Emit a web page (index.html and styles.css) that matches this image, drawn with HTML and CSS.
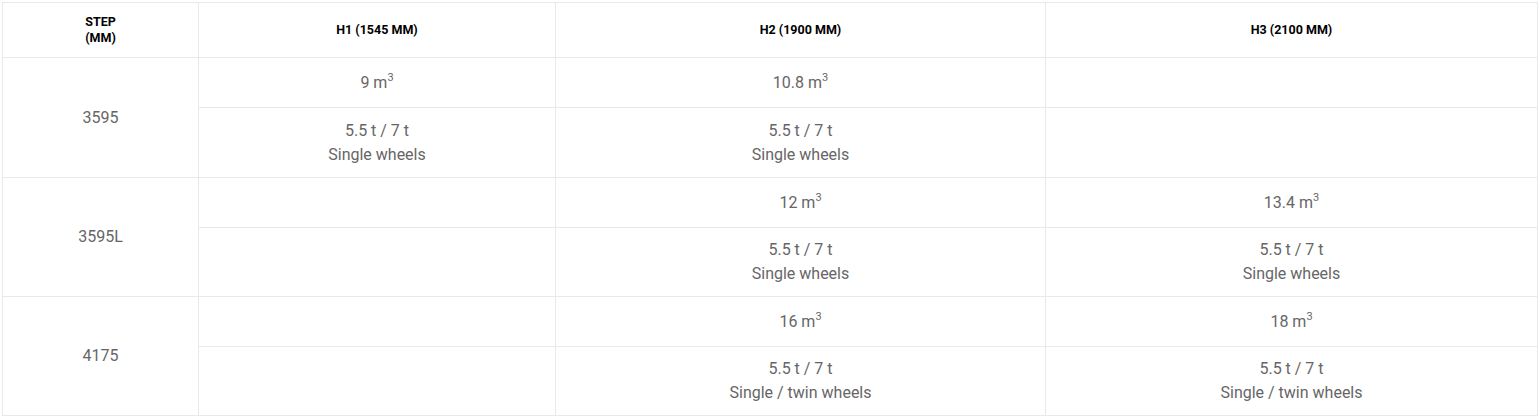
FILE: index.html
```html
<!DOCTYPE html>
<html>
<head>
<meta charset="utf-8">
<link rel="stylesheet" href="styles.css">
</head>
<body>
<table class="spec">
  <colgroup>
    <col class="c1"><col class="c2"><col class="c3"><col class="c4">
  </colgroup>
  <thead>
    <tr class="head">
      <th>STEP<br>(MM)</th>
      <th>H1 (1545 MM)</th>
      <th>H2 (1900 MM)</th>
      <th>H3 (2100 MM)</th>
    </tr>
  </thead>
  <tbody>
    <tr class="vol">
      <td rowspan="2">3595</td>
      <td>9 m<sup>3</sup></td>
      <td>10.8 m<sup>3</sup></td>
      <td></td>
    </tr>
    <tr class="load load-first">
      <td>5.5 t / 7 t<br>Single wheels</td>
      <td>5.5 t / 7 t<br>Single wheels</td>
      <td></td>
    </tr>
    <tr class="vol">
      <td rowspan="2">3595L</td>
      <td></td>
      <td>12 m<sup>3</sup></td>
      <td>13.4 m<sup>3</sup></td>
    </tr>
    <tr class="load">
      <td></td>
      <td>5.5 t / 7 t<br>Single wheels</td>
      <td>5.5 t / 7 t<br>Single wheels</td>
    </tr>
    <tr class="vol">
      <td rowspan="2">4175</td>
      <td></td>
      <td>16 m<sup>3</sup></td>
      <td>18 m<sup>3</sup></td>
    </tr>
    <tr class="load">
      <td></td>
      <td>5.5 t / 7 t<br>Single / twin wheels</td>
      <td>5.5 t / 7 t<br>Single / twin wheels</td>
    </tr>
  </tbody>
</table>
</body>
</html>
```
FILE: styles.css
```css
html, body {
  margin: 0;
  padding: 0;
  background: #fff;
}
body {
  padding: 2px;
  font-family: Roboto, "Liberation Sans", sans-serif;
}
.spec {
  border-collapse: collapse;
  table-layout: fixed;
  width: 1535px;
}
.c1 { width: 196px; }
.c2 { width: 357px; }
.c3 { width: 490px; }
.c4 { width: 492px; }
.spec th,
.spec td {
  border: 1px solid #e9e9e9;
  text-align: center;
  vertical-align: middle;
  padding: 0 8px;
}
.spec th {
  height: 54px;
  font-size: 12.5px;
  font-weight: 700;
  line-height: 16px;
  color: #000;
}
.spec td {
  font-size: 16px;
  line-height: 24px;
  color: #666;
}
.vol td { height: 49px; }
.load td { height: 68px; }
.load-first td { height: 69px; }
.spec sup {
  font-size: 11px;
  line-height: 0;
  vertical-align: 7px;
}
```
